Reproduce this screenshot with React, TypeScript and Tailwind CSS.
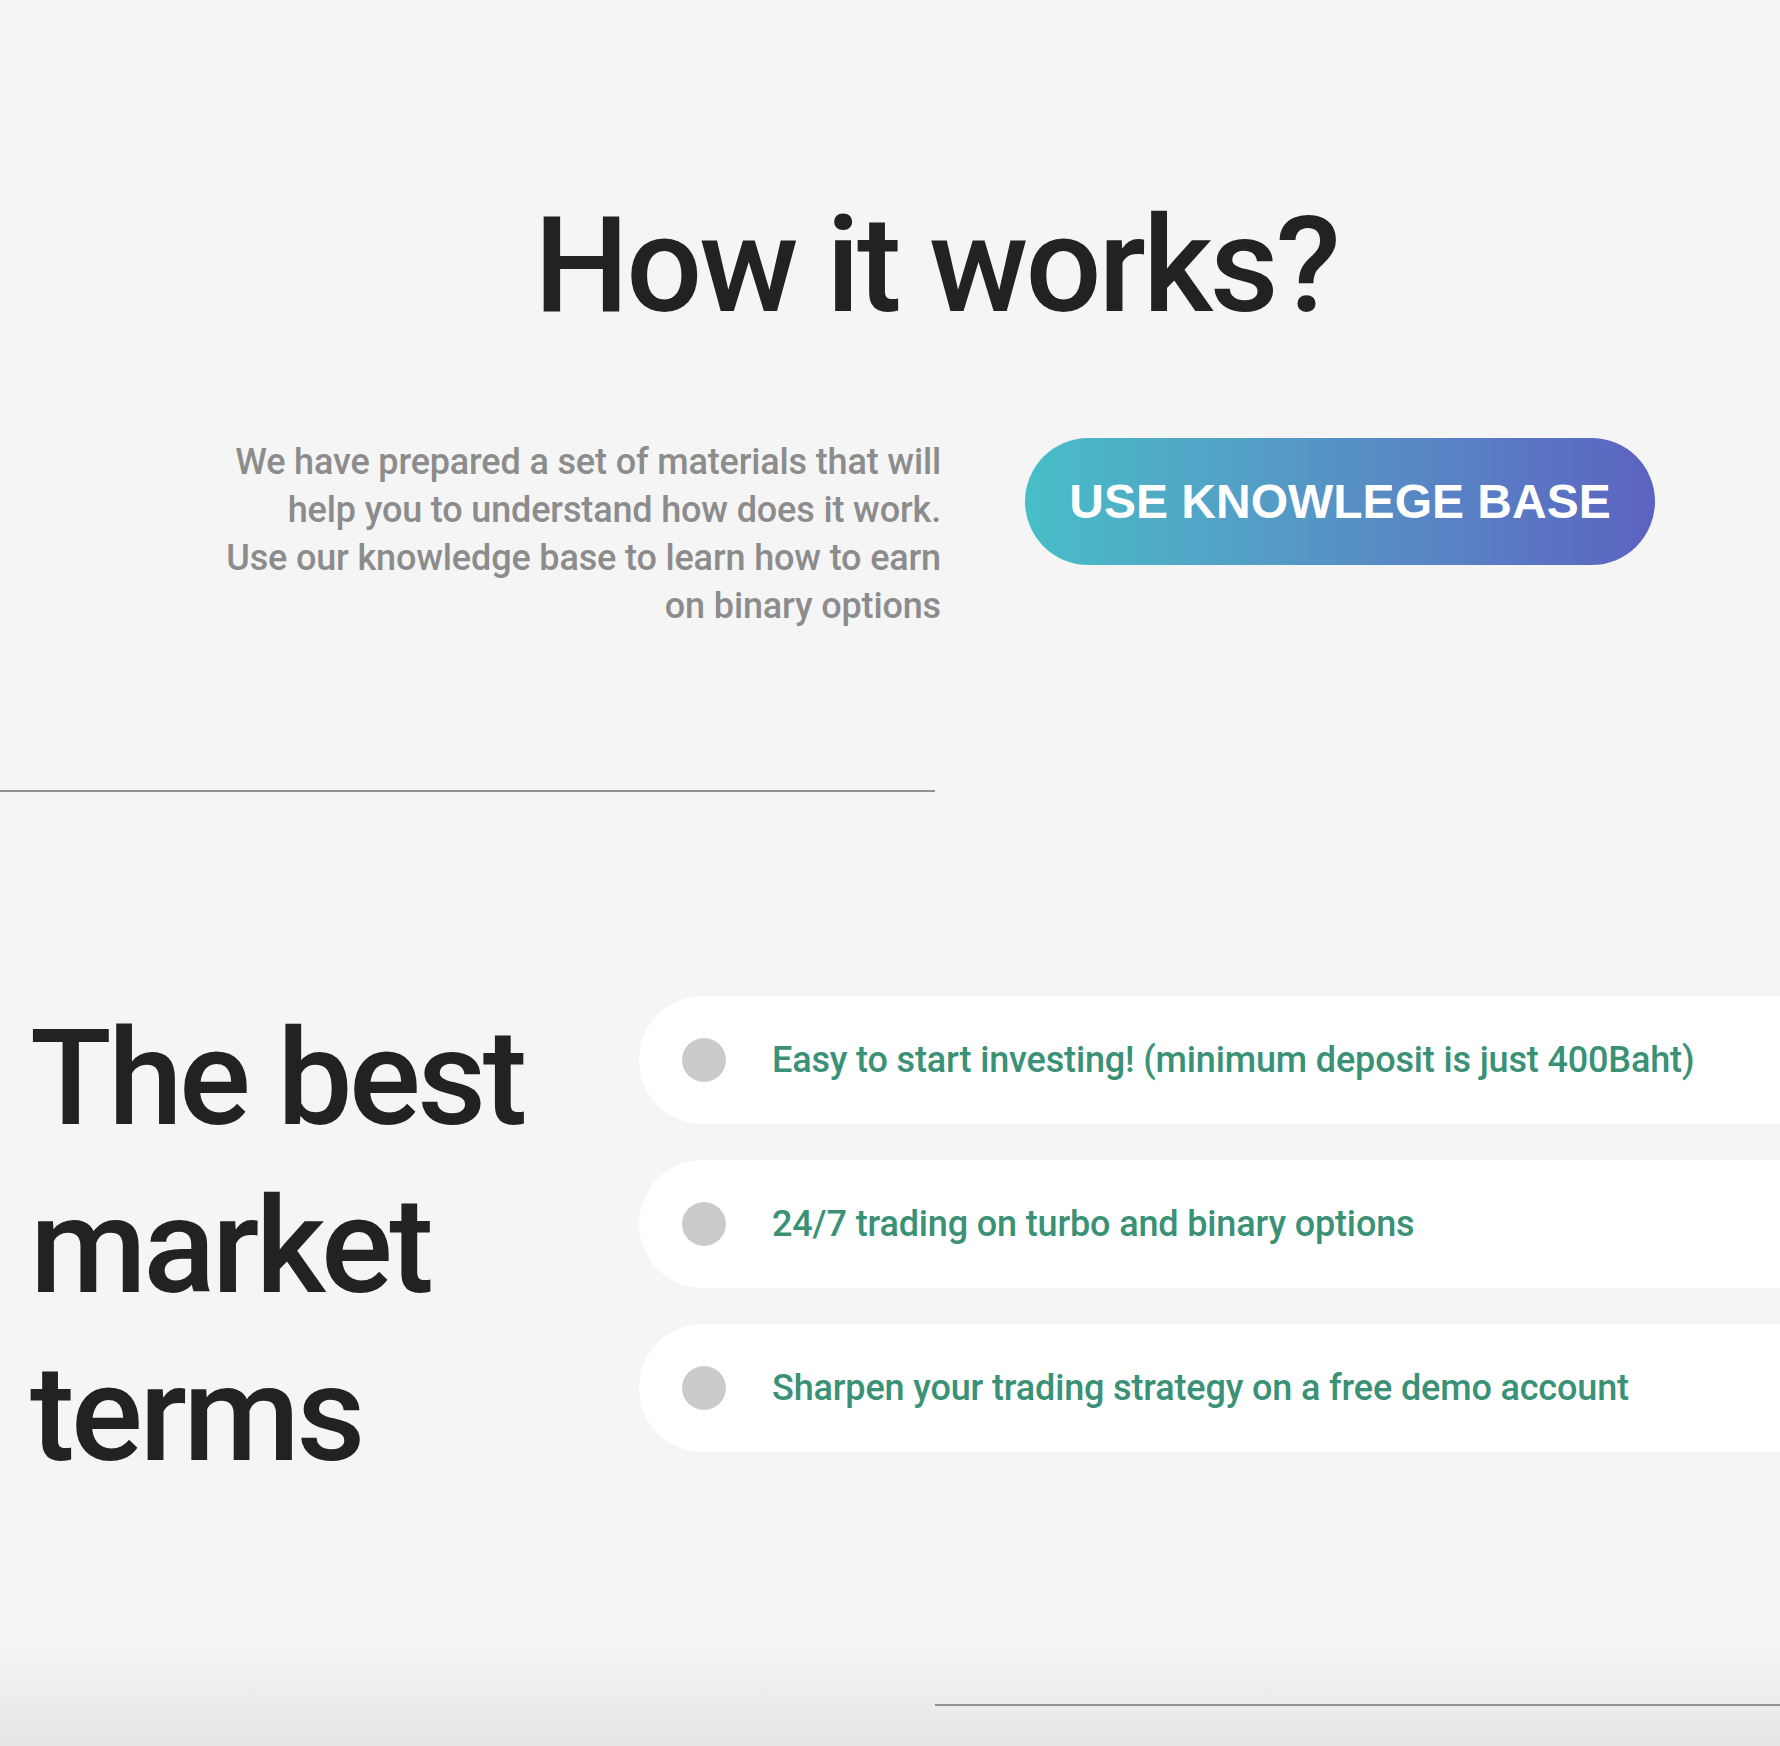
const roboto = { fontFamily: 'Roboto, "Noto Sans", sans-serif' };

const terms = [
  'Easy to start investing! (minimum deposit is just 400Baht)',
  '24/7 trading on turbo and binary options',
  'Sharpen your trading strategy on a free demo account',
];

function TermItem({ text }: { text: string }) {
  return (
    <li className="flex h-[128px] items-center rounded-l-full bg-white pl-[43px]">
      <span className="h-[44px] w-[44px] flex-shrink-0 rounded-full bg-[#cbcbcb]" />
      <span className="ml-[46px] text-[36px] font-medium tracking-[-0.15px] text-[#3a9176]">{text}</span>
    </li>
  );
}

export default function App() {
  return (
    <div className="w-full overflow-hidden bg-[#f5f5f5] text-[#222222]" style={roboto}>
      {/* how it works */}
      <section className="pt-[199px]">
        <h1 className="pl-[92px] text-center text-[134px] font-medium leading-none tracking-[-3px]">
          How it works?
        </h1>
        <div className="mt-[105px] flex items-start pl-[161px]">
          <p className="w-[780px] text-right text-[36px] font-medium leading-[48px] tracking-[-0.15px] text-[#8c8c8c]">
            We have prepared a set of materials that will
            <br />
            help you to understand how does it work.
            <br />
            Use our knowledge base to learn how to earn
            <br />
            on binary options
          </p>
          <button
            className="ml-[84px] flex h-[127px] w-[630px] items-center justify-center rounded-full bg-gradient-to-r from-[#47bec7] to-[#5b63c1] text-[48px] font-bold uppercase text-white"
            style={{ fontFamily: '"Liberation Sans", Arial, sans-serif' }}
          >
            Use knowlege base
          </button>
        </div>
        <div className="mt-[160px] h-[2px] w-[935px] bg-[#919191]" />
      </section>

      {/* market terms */}
      <section className="flex items-start pt-[203px]">
        <h2 className="w-[639px] flex-shrink-0 pl-[30px] text-[134px] font-medium leading-[168px] tracking-[-3.5px]">
          The best
          <br />
          market
          <br />
          terms
        </h2>
        <ul className="mt-[1px] flex flex-1 flex-col gap-[36px]">
          {terms.map((t) => (
            <TermItem key={t} text={t} />
          ))}
        </ul>
      </section>

      <div className="mt-[143px] h-[104px] bg-gradient-to-b from-[#f5f5f5] to-[#e5e5e5] pt-[62px]">
        <div className="ml-[935px] h-[2px] bg-[#919191]" />
      </div>
      <div className="h-[2px] bg-gradient-to-r from-[#7a5a22] via-[#a07a30] to-[#6e4f1e]" />
    </div>
  );
}
